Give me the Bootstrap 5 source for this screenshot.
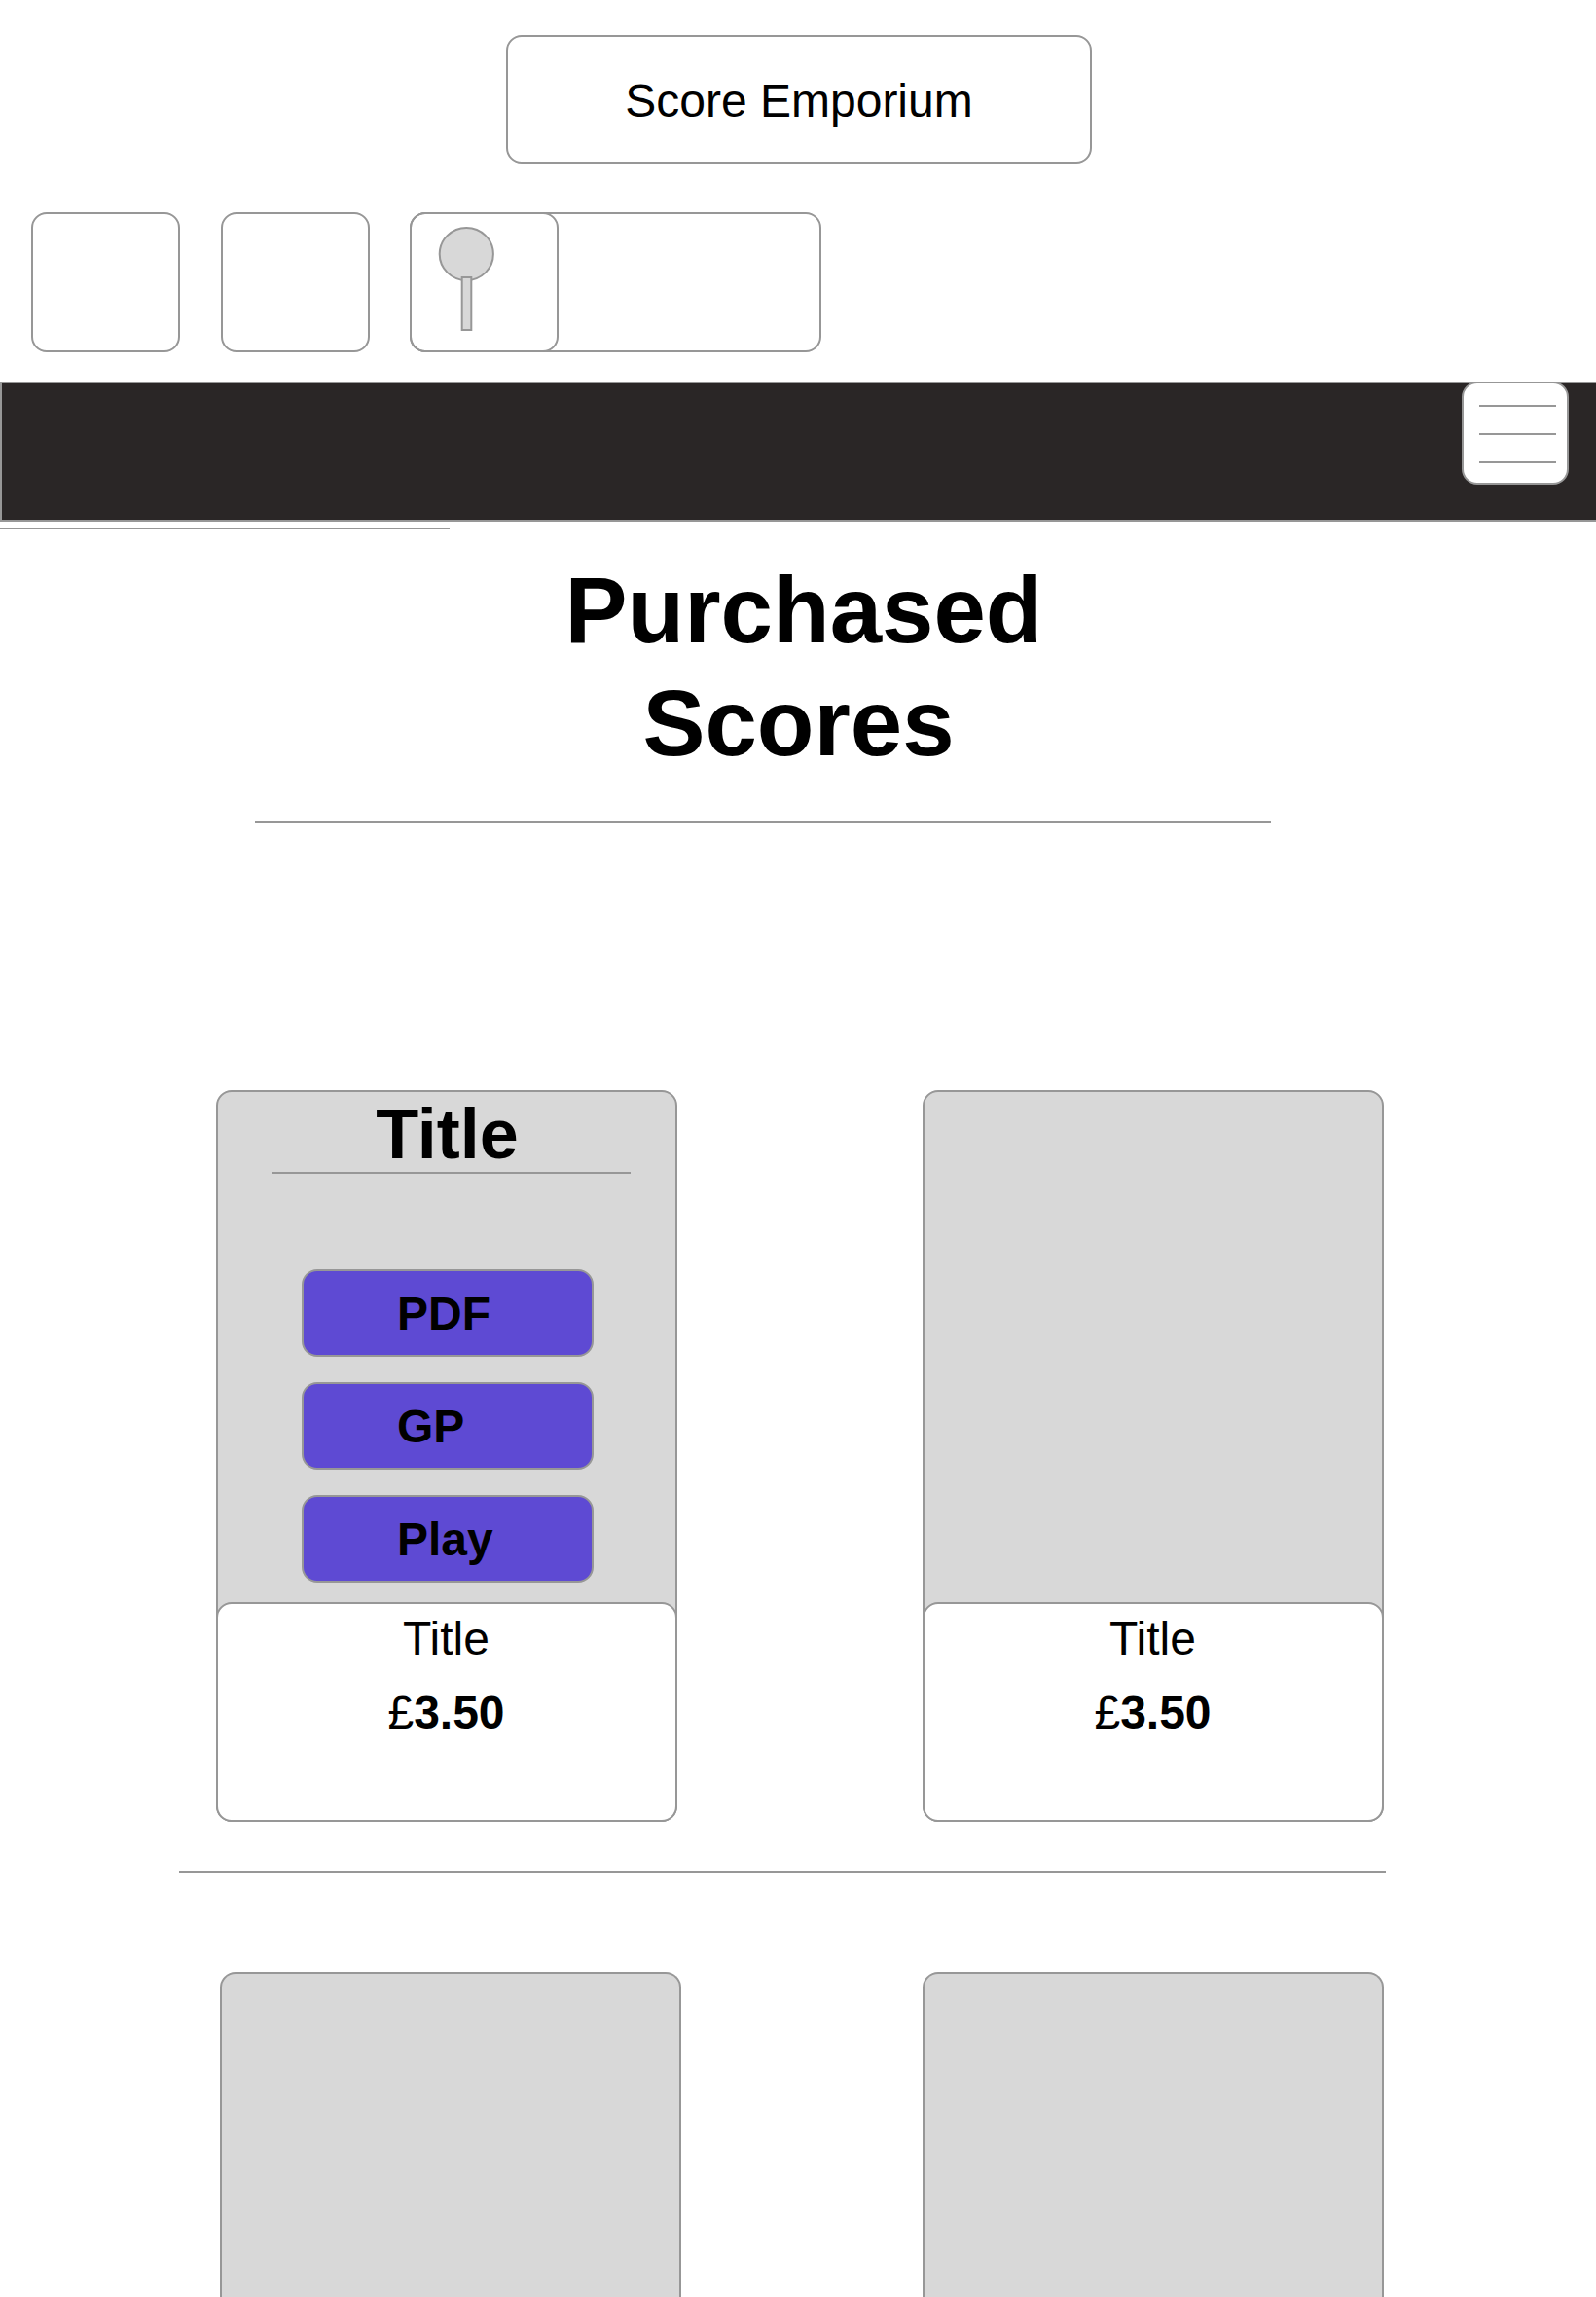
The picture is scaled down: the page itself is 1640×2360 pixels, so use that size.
<!DOCTYPE html>
<html lang="en">
<head>
<meta charset="utf-8">
<meta name="viewport" content="width=device-width, initial-scale=1">
<title>Score Emporium</title>
<link href="https://cdn.jsdelivr.net/npm/bootstrap@5.3.0/dist/css/bootstrap.min.css" rel="stylesheet">
<style>
  :root { --line: #979797; --fill: #d8d8d8; }
  body { font-family: "Liberation Sans", Arial, sans-serif; font-size: 48px; line-height: 58px; color: #000; background: #fff; }
  .page { width: 1640px; height: 2360px; }
  .outlined { border: 2px solid var(--line); border-radius: 16px; }
  .brand { width: 602px; height: 132px; margin: 36px 0 0 520px; padding-top: 4px; }
  .tools { margin: 50px 0 0 32px; gap: 41.5px; }
  .tool { width: 153px; height: 144px; }
  .search { width: 423px; height: 144px; }
  .search-icon { width: 153px; height: 144px; margin: -2px 0 0 -2px; }
  .topbar { height: 144px; margin-top: 30px; padding-right: 28px; background: #2a2626; border: 2px solid var(--line); border-right: 0; }
  .menu { width: 110px; height: 106px; margin-top: -2px; padding: 22px 0 0 16px; gap: 27px; background: #fff; }
  .menu span { width: 79px; height: 2px; background: var(--line); }
  .rule { height: 2px; background: var(--line); }
  .rule-nav { width: 462px; margin-top: 6px; }
  .heading { margin: 25px 0 0; padding-left: 1px; font-size: 96px; line-height: 116px; }
  .heading .first { padding-left: 11px; }
  .rule-heading { width: 1044px; margin: 43px 0 0 262px; }
  .scores { margin: 274px 218px 0 222px; }
  .score { width: 474px; height: 752px; background: var(--fill); }
  .score-title { font-size: 72px; line-height: 86px; margin: 0; padding-left: 1px; }
  .rule-title { width: 368px; margin: -4px 0 98px 56px; }
  .actions { gap: 26px; margin-left: 86px; }
  .action { width: 300px; height: 90px; padding: 15px 0 0 96px; background: #5e4ad3; color: #000; font-size: 48px; line-height: 58px; text-align: left; }
  .info { height: 226px; margin: auto -2px -2px; padding: 7px 1px 0 0; background: #fff; }
  .price { margin-top: 18px; }
  .rule-row { width: 1240px; margin: 50px 0 0 184px; }
  .scores-next { margin: 102px 218px 0 226px; height: 334px; }
  .score-next { width: 474px; height: 336px; background: var(--fill); border-bottom: 0; border-radius: 16px 16px 0 0; }
</style>
</head>
<body>
<div class="page overflow-hidden d-flex flex-column">
  <header>
    <div class="brand outlined d-flex align-items-center justify-content-center">Score Emporium</div>
    <div class="tools d-flex">
      <div class="tool outlined"></div>
      <div class="tool outlined"></div>
      <div class="search outlined">
        <div class="search-icon outlined">
          <svg class="d-block" width="149" height="140" viewBox="423 220 149 140" fill="#d8d8d8" stroke="#979797" stroke-width="2" aria-hidden="true">
            <ellipse cx="479.3" cy="261" rx="27.6" ry="27"/>
            <rect x="474.7" y="285" width="9.6" height="54"/>
          </svg>
        </div>
      </div>
    </div>
  </header>
  <nav class="topbar d-flex justify-content-end flex-shrink-0">
    <div class="menu outlined d-flex flex-column"><span></span><span></span><span></span></div>
  </nav>
  <div class="rule rule-nav"></div>
  <main>
    <h1 class="heading fw-bold text-center"><span class="first d-block">Purchased</span><span class="d-block">Scores</span></h1>
    <div class="rule rule-heading"></div>
    <section class="scores d-flex justify-content-between">
      <article class="score outlined d-flex flex-column">
        <h2 class="score-title fw-bold text-center">Title</h2>
        <div class="rule rule-title flex-shrink-0"></div>
        <div class="actions d-flex flex-column">
          <div class="action outlined fw-bold">PDF</div>
          <div class="action outlined fw-bold">GP</div>
          <div class="action outlined fw-bold">Play</div>
        </div>
        <div class="info outlined text-center">
          <div>Title</div>
          <div class="price">£<b>3.50</b></div>
        </div>
      </article>
      <article class="score outlined d-flex flex-column">
        <div class="info outlined text-center">
          <div>Title</div>
          <div class="price">£<b>3.50</b></div>
        </div>
      </article>
    </section>
    <div class="rule rule-row"></div>
    <section class="scores-next d-flex justify-content-between">
      <article class="score-next outlined"></article>
      <article class="score-next outlined"></article>
    </section>
  </main>
</div>
<script src="https://cdn.jsdelivr.net/npm/bootstrap@5.3.0/dist/js/bootstrap.bundle.min.js"></script>
</body>
</html>
